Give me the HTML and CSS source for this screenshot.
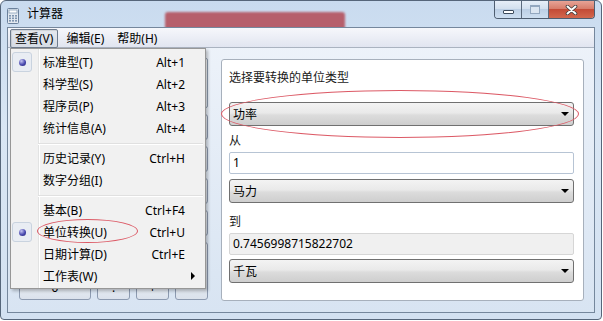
FILE: index.html
```html
<!DOCTYPE html>
<html lang="zh-CN">
<head>
  <meta charset="UTF-8" />
  <title>计算器</title>
  <link rel="stylesheet" href="styles.css">
</head>
<body>

<div class="window">
  <div class="titlebar">
    <svg class="app-icon" viewBox="0 0 12 16">
      <rect x="0.5" y="0.5" width="11" height="15" rx="1" fill="#e3e9f0" stroke="#6b819c"/>
      <rect x="2" y="2" width="8" height="3" fill="#fdfefe" stroke="#8aa0b8" stroke-width="0.8"/>
      <rect x="2" y="7" width="2" height="1.6" fill="#7f95b0"/>
      <rect x="5" y="7" width="2" height="1.6" fill="#7f95b0"/>
      <rect x="8" y="7" width="2" height="1.6" fill="#7f95b0"/>
      <rect x="2" y="9.5" width="2" height="1.6" fill="#7f95b0"/>
      <rect x="5" y="9.5" width="2" height="1.6" fill="#7f95b0"/>
      <rect x="8" y="9.5" width="2" height="1.6" fill="#7f95b0"/>
      <rect x="2" y="12" width="2" height="1.6" fill="#7f95b0"/>
      <rect x="5" y="12" width="2" height="1.6" fill="#7f95b0"/>
      <rect x="8" y="12" width="2" height="1.6" fill="#7f95b0"/>
    </svg>
    <span class="title">计算器</span>
    <div class="blur-spot"></div>
    <div class="caption">
      <div class="cap-btn cap-min"><span></span></div>
      <div class="cap-btn cap-max"><span></span></div>
      <div class="cap-btn cap-close">
        <svg viewBox="0 0 13 10" width="13" height="10">
          <path d="M2.5 1.5 L10.5 8.5 M10.5 1.5 L2.5 8.5" stroke="#3a3a3a" stroke-width="3.6" stroke-linecap="round"/>
          <path d="M2.5 1.5 L10.5 8.5 M10.5 1.5 L2.5 8.5" stroke="#ffffff" stroke-width="2" stroke-linecap="round"/>
        </svg>
      </div>
    </div>
  </div>

  <div class="client">
    <div class="menubar">
      <span class="mb-item open">查看(V)</span>
      <span class="mb-item">编辑(E)</span>
      <span class="mb-item">帮助(H)</span>
    </div>

    <div class="body">
      <!-- calculator keys; all but the last row sit under the open menu -->
      <div class="calc">
        <div class="display"></div>
        <div class="key"></div><div class="key"></div><div class="key"></div><div class="key"></div><div class="key"></div>
        <div class="key"></div><div class="key"></div><div class="key"></div><div class="key"></div><div class="key"></div>
        <div class="key"></div><div class="key"></div><div class="key"></div><div class="key"></div><div class="key"></div>
        <div class="key"></div><div class="key"></div><div class="key"></div><div class="key"></div><div class="key"></div>
        <div class="key"></div><div class="key"></div><div class="key"></div><div class="key"></div><div class="key equals"></div>
        <div class="key zero">0</div><div class="key">.</div><div class="key">+</div>
      </div>

      <!-- unit conversion panel -->
      <div class="converter">
        <div class="conv-label">选择要转换的单位类型</div>
        <div class="combo combo-type"><span>功率</span><i class="combo-arrow"></i></div>
        <div class="conv-label label-from">从</div>
        <div class="field field-from">1</div>
        <div class="combo combo-from"><span>马力</span><i class="combo-arrow"></i></div>
        <div class="conv-label label-to">到</div>
        <div class="field readonly">0.7456998715822702</div>
        <div class="combo combo-to"><span>千瓦</span><i class="combo-arrow"></i></div>
      </div>
    </div>

    <!-- View menu dropdown -->
    <div class="menu">
      <div class="mi checked"><span class="mi-check"><b class="bullet"></b></span><span class="mi-text">标准型(T)</span><span class="mi-key">Alt+1</span></div>
      <div class="mi"><span class="mi-check"></span><span class="mi-text">科学型(S)</span><span class="mi-key">Alt+2</span></div>
      <div class="mi"><span class="mi-check"></span><span class="mi-text">程序员(P)</span><span class="mi-key">Alt+3</span></div>
      <div class="mi"><span class="mi-check"></span><span class="mi-text">统计信息(A)</span><span class="mi-key">Alt+4</span></div>
      <div class="sep"></div>
      <div class="mi"><span class="mi-check"></span><span class="mi-text">历史记录(Y)</span><span class="mi-key">Ctrl+H</span></div>
      <div class="mi"><span class="mi-check"></span><span class="mi-text">数字分组(I)</span></div>
      <div class="sep"></div>
      <div class="mi"><span class="mi-check"></span><span class="mi-text">基本(B)</span><span class="mi-key">Ctrl+F4</span></div>
      <div class="mi checked"><span class="mi-check"><b class="bullet"></b></span><span class="mi-text">单位转换(U)</span><span class="mi-key">Ctrl+U</span></div>
      <div class="mi"><span class="mi-check"></span><span class="mi-text">日期计算(D)</span><span class="mi-key">Ctrl+E</span></div>
      <div class="mi"><span class="mi-check"></span><span class="mi-text">工作表(W)</span><i class="mi-arrow"></i></div>
    </div>
  </div>

  <!-- red annotation ellipses -->
  <div class="mark mark-unit"></div>
  <div class="mark mark-type"></div>
</div>

</body>
</html>
```

FILE: styles.css
```css
body {
  margin: 0;
  background: #fff;
  font-family: "Noto Sans", "Noto Sans CJK SC", sans-serif;
  font-size: 12px;
  color: #000;
}

.window {
  position: relative;
  box-sizing: border-box;
  width: 602px;
  height: 320px;
  border: 1px solid #56667a;
  border-radius: 6px 6px 4px 4px;
  background: linear-gradient(#c9dbef, #d9e6f4 40%, #d3e1f1);
  display: flex;
  flex-direction: column;
  overflow: hidden;
}

/* Title bar */
.titlebar {
  position: relative;
  height: 26px;
  flex: none;
  display: flex;
  align-items: flex-start;
  padding-left: 6px;
}

.app-icon {
  width: 12px;
  height: 16px;
  margin-top: 7px;
}

.title {
  margin: 5px 0 0 8px;
  line-height: 16px;
}

.blur-spot {
  position: absolute;
  left: 164px;
  top: 11px;
  width: 180px;
  height: 17px;
  background: #b65f6b;
  border-radius: 3px 3px 0 0;
  filter: blur(1px);
}

.caption {
  margin-left: auto;
  margin-right: 6px;
  display: flex;
  border: 1px solid #4e5d70;
  border-top: none;
  border-radius: 0 0 4px 4px;
  overflow: hidden;
}

.cap-btn {
  height: 17px;
  display: flex;
  justify-content: center;
  align-items: flex-start;
}

.cap-min,
.cap-max {
  width: 26px;
  border-right: 1px solid #5b6a7d;
  background: linear-gradient(#e6eef8, #d3e0ef 45%, #bccfe5 50%, #cddef0);
}

.cap-min span {
  display: block;
  width: 9px;
  height: 2px;
  margin-top: 9px;
  background: #fff;
  border: 1px solid #3d4b5c;
  border-radius: 1px;
}

.cap-max span {
  display: block;
  width: 8px;
  height: 6px;
  margin-top: 4px;
  border: 1px solid #93a7bf;
  border-top-width: 2px;
  background: #dbe5f1;
}

.cap-close {
  width: 45px;
  background: linear-gradient(#e7a396, #d77d6b 45%, #c44b37 50%, #d2674d);
}

.cap-close svg {
  margin-top: 4px;
}

/* Client area */
.client {
  position: relative;
  flex: 1;
  margin: 0 6px 6px;
  border: 1px solid #75879c;
  display: flex;
  flex-direction: column;
  background: linear-gradient(#eef3fa, #d8e4f2);
}

.menubar {
  height: 19px;
  flex: none;
  display: flex;
  gap: 3px;
  padding-left: 2px;
  border-bottom: 1px solid #aab3c0;
  background: linear-gradient(#f6f7fb, #e1e5f0);
}

.mb-item {
  margin-top: 1px;
  height: 17px;
  line-height: 17px;
  padding: 0 4px;
  border: 1px solid transparent;
  border-radius: 2px;
}

.mb-item.open {
  border-color: #6f7c8d;
  background: linear-gradient(#e6e9ef, #d5dbe4);
  box-shadow: inset 1px 1px 1px rgba(0, 0, 0, 0.1);
}

.body {
  flex: 1;
  display: flex;
  align-items: flex-start;
  gap: 13px;
  padding: 10px 10px 0 11px;
}

/* Calculator keys */
.calc {
  display: grid;
  grid-template-columns: repeat(5, 33px);
  grid-template-rows: 50px repeat(6, 26px);
  gap: 6px;
}

.display {
  grid-column: 1 / -1;
  border: 1px solid #8e9db0;
  border-radius: 2px;
  background: linear-gradient(#fff, #e9eff8);
}

.key {
  border: 1px solid #8c9ab0;
  border-radius: 3px;
  background: linear-gradient(#f4f7fb, #e5ebf2 50%, #dbe2ec);
  display: flex;
  align-items: center;
  justify-content: center;
}

.key.zero {
  grid-column: span 2;
}

.key.equals {
  grid-row: span 2;
}

/* Unit converter */
.converter {
  box-sizing: border-box;
  flex: none;
  width: 363px;
  height: 242px;
  margin-top: 1px;
  padding: 10px 9px 0 7px;
  border: 1px solid #a7b0bc;
  border-radius: 3px;
  background: #fff;
  display: flex;
  flex-direction: column;
}

.conv-label {
  line-height: 16px;
  color: #1a1a1a;
}

.combo {
  box-sizing: border-box;
  height: 24px;
  display: flex;
  align-items: center;
  padding: 0 4px 0 3px;
  border: 1px solid #707070;
  border-radius: 3px;
  background: linear-gradient(#f3f3f3, #e9e9e9 45%, #dcdcdc 55%, #cecece);
}

.combo-arrow {
  margin-left: auto;
  width: 0;
  height: 0;
  border-left: 4px solid transparent;
  border-right: 4px solid transparent;
  border-top: 4px solid #000;
}

.combo-type {
  margin-top: 16px;
}

.label-from {
  margin-top: 7px;
}

.field {
  box-sizing: border-box;
  height: 22px;
  margin-top: 3px;
  padding: 0 3px;
  line-height: 20px;
  border: 1px solid #b7c4d4;
  border-radius: 2px;
  background: #fff;
}

.field.readonly {
  background: #f0f0f0;
  border-color: #d6d6d6;
}

.combo-from {
  margin-top: 5px;
}

.label-to {
  margin-top: 11px;
}

.combo-to {
  margin-top: 4px;
}

/* Dropdown menu */
.menu {
  position: absolute;
  left: 2px;
  top: 20px;
  z-index: 2;
  box-sizing: border-box;
  width: 196px;
  height: 241px;
  padding: 2px 2px 1px;
  border: 1px solid #979797;
  background: linear-gradient(90deg, #f1f1f1 27px, #e2e3e3 27px 28px, #fff 28px 29px, #f1f1f1 29px);
  box-shadow: 2px 2px 3px rgba(0, 0, 0, 0.25);
}

.mi {
  height: 22px;
  display: flex;
  align-items: center;
}

.mi-check {
  box-sizing: border-box;
  flex: none;
  width: 20px;
  height: 20px;
  margin-left: -1px;
  display: flex;
  align-items: center;
  justify-content: center;
}

.mi.checked .mi-check {
  border: 1px solid #c9d3df;
  border-radius: 3px;
  background: #e9edf3;
}

.bullet {
  width: 7px;
  height: 7px;
  border-radius: 50%;
  background: radial-gradient(circle at 35% 30%, #c6c6f2, #4a4ab0 55%, #23236e);
}

.mi-text {
  margin-left: 11px;
}

.mi-key {
  margin-left: auto;
  margin-right: 18px;
}

.mi-arrow {
  margin-left: auto;
  margin-right: 8px;
  width: 0;
  height: 0;
  border-top: 4px solid transparent;
  border-bottom: 4px solid transparent;
  border-left: 4px solid #000;
}

.sep {
  height: 1px;
  margin: 4px 0 2px 25px;
  background: #e0e0e0;
  border-bottom: 1px solid #fff;
}

/* Annotation marks */
.mark {
  position: absolute;
  z-index: 5;
  box-sizing: border-box;
  border: 1.5px solid #dc5a66;
  border-radius: 50%;
}

.mark-unit {
  left: 36px;
  top: 218px;
  width: 101px;
  height: 24px;
}

.mark-type {
  left: 220px;
  top: 89px;
  width: 358px;
  height: 48px;
}
```
